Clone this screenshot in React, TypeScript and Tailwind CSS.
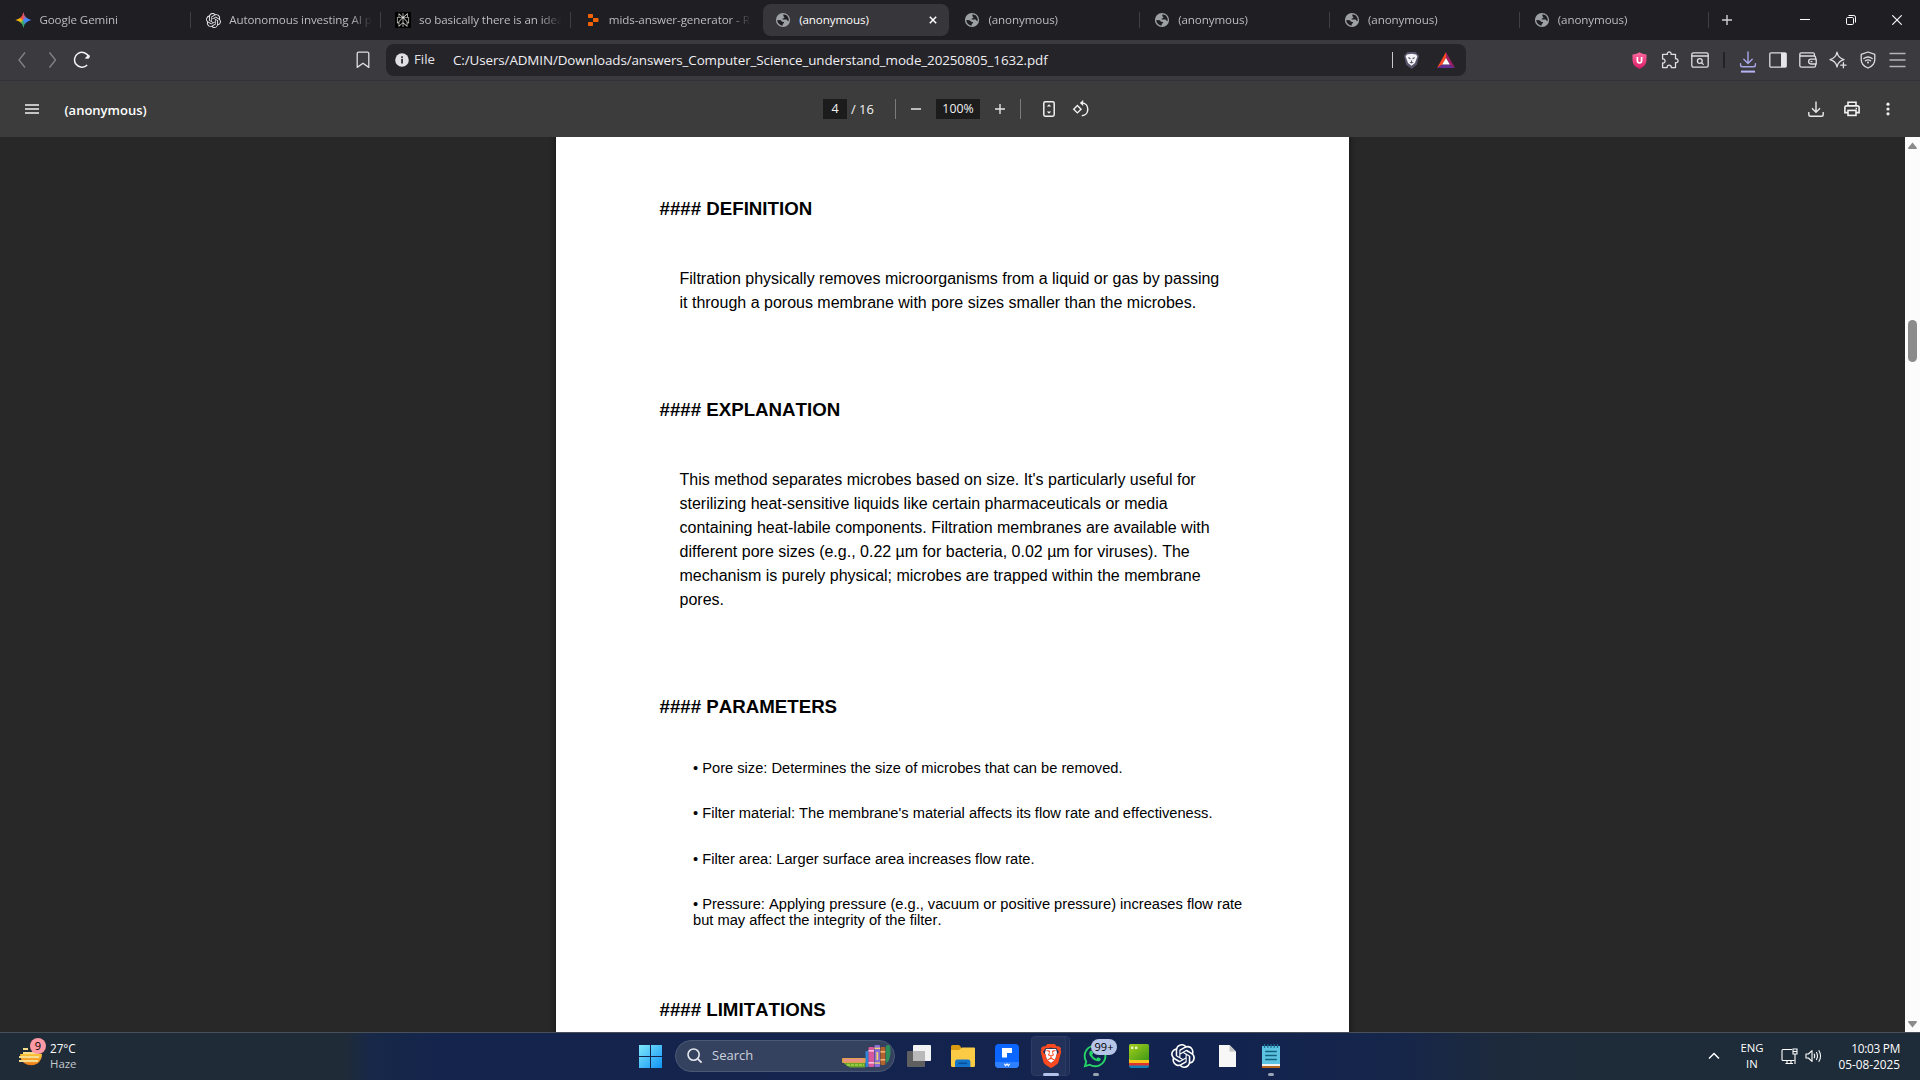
import React from "react";
import { SiBrave, SiOpenai, SiPerplexity } from "react-icons/si";
import { FaWhatsapp } from "react-icons/fa";

const ui = "font-['Open_Sans','Noto_Sans',sans-serif]";

function Svg({ w, h, children, className = "" }: { w: number; h: number; children: React.ReactNode; className?: string }) {
  return (
    <svg width={w} height={h} viewBox={`0 0 ${w} ${h}`} fill="none" className={`shrink-0 ${className}`}>
      {children}
    </svg>
  );
}

/* ---------- Tab strip ---------- */

function GeminiIcon() {
  return (
    <div className="h-4 w-4 shrink-0 bg-[conic-gradient(from_0deg,#f0525c,#4285f4_70deg,#4285f4_130deg,#2fa866_180deg,#7cb342_215deg,#fbbc05_265deg,#f6a623_290deg,#ea4335_330deg,#f0525c)] [clip-path:polygon(50%_0,57%_22%,68%_34%,82%_43%,100%_50%,82%_57%,68%_66%,57%_78%,50%_100%,43%_78%,32%_66%,18%_57%,0_50%,18%_43%,32%_34%,43%_22%)]" />
  );
}

function ReplitIcon() {
  return (
    <Svg w={16} h={16}>
      <rect x="3" y="2" width="5" height="4" rx="0.7" fill="#f26207" />
      <rect x="8" y="6" width="5.5" height="4" rx="0.7" fill="#f26207" />
      <rect x="3" y="10" width="5" height="4" rx="0.7" fill="#f26207" />
    </Svg>
  );
}

function GlobeIcon() {
  return (
    <Svg w={16} h={16}>
      <circle cx="8" cy="8" r="7.1" fill="#9da0a5" />
      <path
        d="M8.6 2.2 L12 3.6 L13.6 6.4 L13.7 9 L12.6 8.9 C12.4 7.9 11.7 7.6 10.7 7.6 L8.2 7.5 C7.5 7.4 7.4 6.7 7.8 6.4 L9.4 5.9 C9.6 4.6 8.3 4.6 8.3 3.7 Z"
        fill="#1f1f23"
      />
      <path d="M2.2 8.1 L5.6 8.3 C6.4 8.4 6.3 9.5 7.2 9.7 L8.7 9.9 C9.4 10.2 9 11.2 8.3 11.5 C7.5 11.9 8 12.9 7.4 13.7 C4.6 13.4 2.4 11.2 2.2 8.1 Z" fill="#1f1f23" />
    </Svg>
  );
}

type TabInfo = { title: string; icon: React.ReactNode; active?: boolean; sep?: boolean };

const tabs: TabInfo[] = [
  { title: "Google Gemini", icon: <GeminiIcon />, sep: true },
  { title: "Autonomous investing AI p", icon: <SiOpenai className="h-[15px] w-[15px] text-[#e6e6e6]" />, sep: true },
  {
    title: "so basically there is an idea",
    icon: (
      <span className="flex h-4 w-4 items-center justify-center bg-black">
        <SiPerplexity className="h-3.5 w-3.5 text-[#e8e8e0]" />
      </span>
    ),
    sep: true,
  },
  { title: "mids-answer-generator - R", icon: <ReplitIcon /> },
  { title: "(anonymous)", icon: <GlobeIcon />, active: true },
  { title: "(anonymous)", icon: <GlobeIcon />, sep: true },
  { title: "(anonymous)", icon: <GlobeIcon />, sep: true },
  { title: "(anonymous)", icon: <GlobeIcon />, sep: true },
  { title: "(anonymous)", icon: <GlobeIcon />, sep: true },
];

function Tab({ tab }: { tab: TabInfo }) {
  return (
    <div className="flex h-10 w-[189.8px] shrink-0 items-center">
      <div
        className={
          tab.active
            ? "flex h-8 w-[186px] items-center rounded-lg bg-[#37363b] pl-3 text-white"
            : "flex h-8 w-[186px] items-center pl-[11.4px] text-[#bdbcc0]"
        }
      >
        <span className="flex w-4 justify-center">{tab.icon}</span>
        <span
          className={
            tab.active
              ? "ml-2 flex-1 text-[11.6px] tracking-[-0.1px] whitespace-nowrap"
              : "mr-[8px] ml-2 flex-1 overflow-hidden [mask-image:linear-gradient(90deg,#000_calc(100%-22px),transparent)] text-[11.6px] tracking-[-0.1px] whitespace-nowrap"
          }
        >
          {tab.title}
        </span>
        {tab.active && (
          <Svg w={8} h={8} className="mr-3">
            <path d="M0.8 0.8 L7.2 7.2 M7.2 0.8 L0.8 7.2" stroke="#fff" strokeWidth="1.5" />
          </Svg>
        )}
      </div>
      {tab.sep && <div className="h-4 w-px bg-[#3f3e44]" />}
    </div>
  );
}

function TabStrip() {
  return (
    <div className="flex h-10 items-center bg-[#1f1e23] pl-1">
      {tabs.map((t, i) => (
        <Tab key={i} tab={t} />
      ))}
      <Svg w={12} h={12} className="ml-[9px]">
        <path d="M6 1 V11 M1 6 H11" stroke="#d0d0d3" strokeWidth="1.4" />
      </Svg>
      <Svg w={10} h={10} className="ml-[67px]">
        <path d="M0 4.5 H10" stroke="#fff" />
      </Svg>
      <Svg w={10} h={10} className="ml-9">
        <rect x="0.5" y="2.5" width="7" height="7" rx="1.2" stroke="#fff" />
        <path d="M2.5 0.5 H7.8 Q9.5 0.5 9.5 2.2 V7.5" stroke="#fff" />
      </Svg>
      <Svg w={10} h={10} className="ml-9">
        <path d="M0.3 0.3 L9.7 9.7 M9.7 0.3 L0.3 9.7" stroke="#fff" strokeWidth="1.1" />
      </Svg>
    </div>
  );
}

/* ---------- Address row ---------- */

function Cell({ children }: { children: React.ReactNode }) {
  return <div className="flex h-10 w-[30px] shrink-0 items-center justify-center">{children}</div>;
}

function BatIcon() {
  return (
    <Svg w={18} h={16}>
      <path d="M9 0 L0 16 L5.4 12.6 L9 6 Z" fill="#ff4724" />
      <path d="M9 0 L18 16 L12.6 12.6 L9 6 Z" fill="#9e1f63" />
      <path d="M0 16 H18 L12.8 12.4 H5.2 Z" fill="#662d91" />
      <path d="M9 6 L12.8 12.6 H5.2 Z" fill="#fff" />
    </Svg>
  );
}

const stroke = { stroke: "#dedde2", strokeWidth: 1.3, strokeLinejoin: "round", strokeLinecap: "round" } as const;

function AddressRow() {
  return (
    <div className="flex h-10 items-center bg-[#3b3a3f] pl-[7px]">
      <Cell>
        <Svg w={18} h={18}>
          <path d="M12 1.5 L6 9 L12 16.5" stroke="#85848a" strokeWidth="1.3" />
        </Svg>
      </Cell>
      <Cell>
        <Svg w={18} h={18}>
          <path d="M6.5 1.5 L12.5 9 L6.5 16.5" stroke="#85848a" strokeWidth="1.3" />
        </Svg>
      </Cell>
      <Cell>
        <Svg w={18} h={18}>
          <path d="M14.2 14 A7.4 7.4 0 1 1 15.8 6" stroke="#f4f4f6" strokeWidth="1.5" />
          <path d="M11.6 7.4 L15.6 3.4 Q17 4 16.8 5.6 Q16.6 7.6 15.2 7.8 Z" fill="#f4f4f6" />
        </Svg>
      </Cell>
      <div className="ml-[254px] flex w-6 justify-center">
        <Svg w={14} h={18}>
          <path d="M1.2 2.6 Q1.2 1.2 2.6 1.2 H11.4 Q12.8 1.2 12.8 2.6 V16.4 L7 12.2 L1.2 16.4 Z" stroke="#dedde2" strokeWidth="1.3" strokeLinejoin="round" />
        </Svg>
      </div>
      <div className="ml-[11px] flex h-8 w-[1080px] shrink-0 items-center rounded-lg bg-[#252429] pr-[11px] pl-[9px] text-[#e3e2e6]">
        <Svg w={14} h={14}>
          <circle cx="7" cy="7" r="6.8" fill="#e0dfe4" />
          <rect x="6.2" y="5.8" width="1.7" height="4.7" fill="#252429" />
          <rect x="6.2" y="3.3" width="1.7" height="1.6" fill="#252429" />
        </Svg>
        <span className="ml-[5px] w-[39px] text-[13.2px]">File</span>
        <span className="flex-1 text-[13.4px] tracking-[-0.1px] whitespace-nowrap text-[#f0eff3]">
          C:/Users/ADMIN/Downloads/answers_Computer_Science_understand_mode_20250805_1632.pdf
        </span>
        <div className="h-4 w-px bg-[#c9c8cd]" />
        <Svg w={15} h={17} className="ml-[11px]">
          <path d="M3.5 0 H11.5 L15 3.5 L13 12.5 L7.5 17 L2 12.5 L0 3.5 Z" fill="#55546a" />
          <path
            fillRule="evenodd"
            d="M3 2.4 L7.5 1.8 L12 2.4 L13.4 4.4 L11.6 9.2 L11 11 L7.5 13.8 L4 11 L3.4 9.2 L1.6 4.4 Z M4.2 5 L6.6 6 L6.2 7.4 L4.4 6.3 Z M10.8 5 L8.4 6 L8.8 7.4 L10.6 6.3 Z M6.8 8.6 H8.2 L7.9 9.8 L9.6 10.6 L7.5 11.5 L5.4 10.6 L7.1 9.8 Z"
            fill="#f4f4f8"
          />
        </Svg>
        <div className="ml-[18px]">
          <BatIcon />
        </div>
      </div>
      <div className="ml-[158.5px] flex items-center">
        <Cell>
          <Svg w={15} h={17}>
            <defs>
              <linearGradient id="ub" x1="0" y1="0" x2="0" y2="1">
                <stop offset="0" stopColor="#ff6ba0" />
                <stop offset="1" stopColor="#d91b66" />
              </linearGradient>
            </defs>
            <path d="M7.5 0.3 C9.6 1.7 12 2.2 14.5 2.4 V8 C14.5 12.4 11.6 15.2 7.5 16.8 C3.4 15.2 0.5 12.4 0.5 8 V2.4 C3 2.2 5.4 1.7 7.5 0.3 Z" fill="url(#ub)" />
            <path d="M5.4 5 V8.8 Q5.4 11 7.5 11 Q9.6 11 9.6 8.8 V5" stroke="#fff" strokeWidth="1.7" />
          </Svg>
        </Cell>
        <Cell>
          <Svg w={18} h={18}>
            <path
              d="M1.6 3.4 H6.3 C6 1.9 7 0.9 8.2 0.9 C9.5 0.9 10.4 1.9 10.1 3.4 H14.5 V7.8 C16 7.5 17.1 8.4 17.1 9.7 C17.1 11 16 11.9 14.5 11.6 V16.6 H10.3 C10.4 15 9.5 14.2 8.2 14.2 C6.9 14.2 6 15 6.1 16.6 H1.6 V12 C3.2 12.2 4.1 11.2 4.1 10 C4.1 8.7 3.2 7.8 1.6 8 Z"
              {...stroke}
            />
          </Svg>
        </Cell>
        <Cell>
          <Svg w={18} h={16}>
            <rect x="0.8" y="0.8" width="16.4" height="14.4" rx="1.6" {...stroke} />
            <path d="M1 4 H17" {...stroke} />
            <circle cx="8.8" cy="9" r="2.4" {...stroke} />
            <path d="M10.7 10.9 L12.3 12.4" {...stroke} />
          </Svg>
        </Cell>
        <div className="flex w-[18px] justify-center">
          <div className="h-4 w-0.5 bg-[#232227]" />
        </div>
        <Cell>
          <Svg w={18} h={22} className="mt-1">
            <path d="M9 1 V12 M4.8 8.2 L9 12.4 L13.2 8.2 M1.6 12.8 V14 Q1.6 15.8 3.4 15.8 H14.6 Q16.4 15.8 16.4 14 V12.8" stroke="#a9a6e8" strokeWidth="1.4" strokeLinecap="round" />
            <rect x="2" y="19.6" width="14" height="2" fill="#b7b4f5" />
          </Svg>
        </Cell>
        <Cell>
          <Svg w={18} h={16}>
            <rect x="0.8" y="0.8" width="16.4" height="14.4" rx="1.2" {...stroke} />
            <rect x="12" y="1" width="5.2" height="14" fill="#e6e5ea" />
          </Svg>
        </Cell>
        <Cell>
          <Svg w={18} h={16}>
            <path d="M15.4 4 V2.2 Q15.4 0.8 14 0.8 H2.4 Q0.8 0.8 0.8 2.4 V13.4 Q0.8 15.2 2.6 15.2 H15 Q16.6 15.2 16.6 13.6 V5.4 Q16.6 4 15.2 4 H2.4 Q0.8 4 0.8 2.4" {...stroke} />
            <path d="M17.2 7.2 H12 Q9.6 7.2 9.6 9.6 Q9.6 12 12 12 H17.2 Z M12 9.6 H13" {...stroke} fill="#3b3a3f" />
          </Svg>
        </Cell>
        <Cell>
          <Svg w={18} h={18}>
            <path d="M8 1.2 C8.8 5.6 10.8 7.6 15 8.6 C10.8 9.6 8.8 11.6 8 16 C7.2 11.6 5.2 9.6 1 8.6 C5.2 7.6 7.2 5.6 8 1.2 Z" {...stroke} />
            <circle cx="14.4" cy="14.2" r="3.6" fill="#3b3a3f" />
            <path d="M14.4 11.6 V16.8 M11.8 14.2 H17" {...stroke} />
          </Svg>
        </Cell>
        <Cell>
          <Svg w={16} h={18}>
            <path d="M8 1 L14.8 3.4 V8.4 C14.8 12.4 12 15.4 8 17 C4 15.4 1.2 12.4 1.2 8.4 V3.4 Z" {...stroke} />
            <path d="M3.8 7.6 Q8 4.4 12.2 7.6 M5.4 9.8 Q8 8 10.6 9.8" {...stroke} />
            <circle cx="8" cy="11.6" r="1" fill="#dedde2" />
          </Svg>
        </Cell>
        <Cell>
          <Svg w={17} h={16}>
            <path d="M0.5 1.6 H16.5 M0.5 8 H16.5 M0.5 14.4 H16.5" stroke="#b5b4b9" strokeWidth="1.5" />
          </Svg>
        </Cell>
      </div>
    </div>
  );
}

/* ---------- PDF toolbar ---------- */

function PdfToolbar() {
  return (
    <div className="flex h-[57px] items-center border-t border-[#333238] bg-[#3c3c3c] text-[#f1f1f1]">
      <Svg w={14} h={10} className="ml-[25px]">
        <path d="M0 1 H14 M0 5 H14 M0 9 H14" stroke="#f1f1f1" strokeWidth="1.3" />
      </Svg>
      <span className="mt-[3px] ml-[25.5px] w-[758.5px] text-[13px] font-semibold text-white">(anonymous)</span>
      <div className="flex h-5 w-6 items-center justify-center bg-[#1c1c1c] pt-px text-[12.5px] font-medium">4</div>
      <span className="mt-px ml-1 w-[44px] text-[12.9px] font-medium">/ 16</span>
      <div className="h-5 w-px bg-[#7a7a7a]" />
      <Svg w={12} h={12} className="ml-[14px]">
        <path d="M1 6 H11" stroke="#e4e4e4" strokeWidth="1.5" />
      </Svg>
      <div className="ml-[14px] flex h-5 w-11 items-center justify-center bg-[#1c1c1c] pt-px text-[12.3px] font-medium">100%</div>
      <Svg w={12} h={12} className="ml-[14px]">
        <path d="M1 6 H11 M6 1 V11" stroke="#e4e4e4" strokeWidth="1.4" />
      </Svg>
      <div className="ml-[14px] h-5 w-px bg-[#7a7a7a]" />
      <Svg w={12} h={16} className="ml-[22px]">
        <rect x="0.8" y="0.8" width="10.4" height="14.4" rx="1.4" stroke="#f1f1f1" strokeWidth="1.5" />
        <path d="M6 3.2 L8.2 5.6 H3.8 Z M6 12.8 L8.2 10.4 H3.8 Z" fill="#f1f1f1" />
      </Svg>
      <Svg w={18} h={18} className="ml-[17px]">
        <path d="M9.6 3 C13.4 3 15.8 5.6 15.8 9.2 C15.8 12.8 13.4 15.6 9.8 15.8" stroke="#f1f1f1" strokeWidth="1.5" />
        <path d="M11.2 0 V6 L7.8 3 Z" fill="#f1f1f1" />
        <rect x="2.8" y="6.6" width="5.2" height="5.2" transform="rotate(45 5.4 9.2)" stroke="#f1f1f1" strokeWidth="1.4" />
      </Svg>
      <Svg w={16} h={16} className="ml-[718px]">
        <path d="M8 0.5 V11 M4 7.2 L8 11.2 L12 7.2 M0.8 11 V13.4 Q0.8 15.2 2.6 15.2 H13.4 Q15.2 15.2 15.2 13.4 V11" stroke="#e8e8e8" strokeWidth="1.4" />
      </Svg>
      <Svg w={16} h={16} className="ml-5">
        <path d="M4 4.8 V1.2 H12 V4.8 M4 11.6 H0.9 V6.6 Q0.9 4.9 2.6 4.9 H13.4 Q15.1 4.9 15.1 6.6 V11.6 H12" stroke="#f1f1f1" strokeWidth="1.6" />
        <rect x="4" y="9.4" width="8" height="5" stroke="#f1f1f1" strokeWidth="1.6" />
        <rect x="11.6" y="6.8" width="1.4" height="1.4" fill="#f1f1f1" />
      </Svg>
      <Svg w={4} h={14} className="ml-[26px]">
        <circle cx="2" cy="2.2" r="1.6" fill="#f1f1f1" />
        <circle cx="2" cy="7" r="1.6" fill="#f1f1f1" />
        <circle cx="2" cy="11.8" r="1.6" fill="#f1f1f1" />
      </Svg>
    </div>
  );
}

/* ---------- PDF page ---------- */

function Heading({ children, className }: { children: string; className: string }) {
  return <h4 className={`ml-[103.5px] text-[18.7px] leading-6 font-bold ${className}`}>{children}</h4>;
}

function Lines({ lines }: { lines: string[] }) {
  return (
    <div className="mt-[46px] ml-[123.5px] text-[16px] leading-6">
      {lines.map((l) => (
        <div key={l}>{l}</div>
      ))}
    </div>
  );
}

function PdfPage() {
  return (
    <div className="flex h-[895px] overflow-hidden bg-[#282828]">
      <div className="ml-[556px] h-[895px] w-[793px] overflow-hidden bg-white pt-[60px] font-['Liberation_Sans',Arial,sans-serif] whitespace-nowrap text-black shadow-[0_0_5px_2px_rgba(0,0,0,0.35)] [font-kerning:none] [font-variant-ligatures:none]">
        <Heading className="">#### DEFINITION</Heading>
        <Lines
          lines={[
            "Filtration physically removes microorganisms from a liquid or gas by passing",
            "it through a porous membrane with pore sizes smaller than the microbes.",
          ]}
        />
        <Heading className="mt-[83px]">#### EXPLANATION</Heading>
        <Lines
          lines={[
            "This method separates microbes based on size. It's particularly useful for",
            "sterilizing heat-sensitive liquids like certain pharmaceuticals or media",
            "containing heat-labile components. Filtration membranes are available with",
            "different pore sizes (e.g., 0.22 µm for bacteria, 0.02 µm for viruses). The",
            "mechanism is purely physical; microbes are trapped within the membrane",
            "pores.",
          ]}
        />
        <Heading className="mt-[83px]">#### PARAMETERS</Heading>
        <ul className="mt-[41px] ml-[137px] text-[14.667px] leading-4">
          <li>• Pore size: Determines the size of microbes that can be removed.</li>
          <li className="mt-[29px]">• Filter material: The membrane's material affects its flow rate and effectiveness.</li>
          <li className="mt-[30px]">• Filter area: Larger surface area increases flow rate.</li>
          <li className="mt-[29px]">
            • Pressure: Applying pressure (e.g., vacuum or positive pressure) increases flow rate
            <br />
            but may affect the integrity of the filter.
          </li>
        </ul>
        <Heading className="mt-[70px]">#### LIMITATIONS</Heading>
      </div>
      <div className="ml-auto flex w-[15px] flex-col items-center bg-[#fcfcfc]">
        <Svg w={9} h={7} className="mt-[5px]">
          <path d="M4.5 0.5 L9 6 Q9 7 8 7 H1 Q0 7 0 6 Z" fill="#8b8b8b" />
        </Svg>
        <div className="mt-[171px] h-[42px] w-[9px] rounded-full bg-[#8b8b8b]" />
        <Svg w={9} h={7} className="mt-auto mb-1">
          <path d="M4.5 6.5 L9 1 Q9 0 8 0 H1 Q0 0 0 1 Z" fill="#8b8b8b" />
        </Svg>
      </div>
    </div>
  );
}

/* ---------- Taskbar ---------- */

function Books() {
  return (
    <Svg w={50} h={24}>
      <path d="M0 17 H23 V23.5 H8 Q3 21.5 0 17 Z" fill="#6aa52c" />
      <rect x="0" y="14" width="24" height="5" rx="1" fill="#e0a04a" />
      <rect x="2" y="15" width="19" height="2.6" fill="#e88f8a" />
      <path d="M5 21 H22" stroke="#a7d94a" strokeWidth="1.6" strokeDasharray="3 1" />
      <rect x="23.5" y="7" width="3" height="16" fill="#2f86d8" />
      <rect x="26.5" y="3" width="5.5" height="20" rx="1" fill="#d9589b" />
      <rect x="26.5" y="6" width="5.5" height="1.6" fill="#ffc0dd" />
      <rect x="26.5" y="18" width="5.5" height="1.6" fill="#ffc0dd" />
      <rect x="32.5" y="1" width="5.5" height="22" rx="1" fill="#8b6fd8" />
      <rect x="32.5" y="3.6" width="5.5" height="1.4" fill="#f4d06a" />
      <rect x="34.4" y="8" width="1.8" height="8" fill="#f4d06a" />
      <rect x="32.5" y="18.4" width="5.5" height="1.4" fill="#f4d06a" />
      <rect x="38.5" y="3" width="4.8" height="18" rx="1" fill="#b3622d" />
      <rect x="38.5" y="7" width="4.8" height="1.6" fill="#f0b27a" />
      <rect x="38.5" y="15" width="4.8" height="1.6" fill="#f0b27a" />
      <path d="M43.8 2 Q46 0 48 2 Q49.6 10 46.6 17 L43.8 19.5 Z" fill="#2f8f5a" />
    </Svg>
  );
}

function BraveIcon() {
  return (
    <div className="relative flex h-6 w-6 items-center justify-center">
      <Svg w={14} h={16} className="absolute">
        <path d="M2 1 H12 L13 5 L11 12 L7 15 L3 12 L1 5 Z" fill="#fff" />
      </Svg>
      <SiBrave className="relative h-6 w-6 text-[#fb4a1f]" />
    </div>
  );
}

function AppCell({ children, className = "" }: { children: React.ReactNode; className?: string }) {
  return <div className={`relative flex h-10 w-11 shrink-0 items-center justify-center ${className}`}>{children}</div>;
}

function Taskbar() {
  return (
    <div className="flex h-12 items-center border-t border-[#4a5059] bg-[linear-gradient(90deg,#1f2b37_0px,#1f2b37_345px,#182848_370px,#14244c_440px,#14244d_640px,#12234f_1240px,#16264a_1400px,#1d2a3c_1500px,#1e2b38_1600px,#1e2b38_1920px)] pb-px text-white">
      <div className="relative ml-[18px] h-8 w-[32px]">
        <Svg w={28} h={30}>
          <defs>
            <linearGradient id="sun" x1="0" y1="0" x2="0" y2="1">
              <stop offset="0" stopColor="#f8c63a" />
              <stop offset="1" stopColor="#f07a1a" />
            </linearGradient>
          </defs>
          <path d="M2 14 H24 Q24 20 19.5 23.4 Q12.5 27.5 6 23 Q4 21.5 3 19 Z" fill="url(#sun)" />
          <path d="M5 9 H10 M5 13 H20 M1 17 H21 M1 21 H20" stroke="#f5dc8e" strokeWidth="1.8" />
        </Svg>
        <div className="absolute -top-[2px] left-3 flex h-4 w-4 items-center justify-center rounded-full bg-[#ff99a4] text-[11px] text-black">9</div>
      </div>
      <div className="w-[589px] leading-4">
        <div className="text-[11.7px]">27°C</div>
        <div className="text-[11.4px] text-[#c4c9ce]">Haze</div>
      </div>

      <Svg w={23} h={23}>
        <defs>
          <linearGradient id="win" x1="0" y1="0" x2="1" y2="1">
            <stop offset="0" stopColor="#7fe9fb" />
            <stop offset="1" stopColor="#1093f5" />
          </linearGradient>
        </defs>
        <path d="M0 0 H11 V11 H0 Z M12 0 H23 V11 H12 Z M0 12 H11 V23 H0 Z M12 12 H23 V23 H12 Z" fill="url(#win)" />
      </Svg>
      <div className="ml-[13px] flex h-8 w-[220px] items-center rounded-full border border-[#4a5878] bg-[#35425f] pr-[2px] pl-[11px]">
        <Svg w={16} h={16}>
          <circle cx="6.6" cy="6.6" r="5.6" stroke="#e4e7ee" strokeWidth="1.6" />
          <path d="M10.8 10.8 L14.6 14.6" stroke="#e4e7ee" strokeWidth="1.8" />
        </Svg>
        <span className="ml-[9px] flex-1 text-[13px] text-[#ccd2dd]">Search</span>
        <Books />
      </div>
      <div className="flex items-center">
        <AppCell className="ml-[2px]">
          <Svg w={24} h={22}>
            <rect x="6" y="0" width="18" height="16" rx="1" fill="#f2f2f2" />
            <rect x="0" y="6" width="18" height="16" rx="1" fill="#5f5f5f" />
            <path d="M6 6 H18 V16 H6 Z" fill="#b9b9b9" />
          </Svg>
        </AppCell>
        <AppCell>
          <Svg w={24} h={22}>
            <path d="M0 1.5 Q0 0 1.5 0 H8 L10.5 2.5 H0 Z M0 2 H10 V6 H0 Z" fill="#d99a12" />
            <path d="M0 5 H8 L11 2.4 H23 Q24 2.4 24 3.4 V20.5 Q24 22 22.5 22 H1.5 Q0 22 0 20.5 Z" fill="#fccb45" />
            <path d="M4 22 V17 Q4 14.6 6.4 14.6 H17 Q19.4 14.6 19.4 17 V22 Z" fill="#1374cc" />
            <rect x="7.5" y="17.5" width="8.6" height="1.6" fill="#0a4f96" />
          </Svg>
        </AppCell>
        <AppCell>
          <Svg w={24} h={24}>
            <rect width="24" height="24" rx="4" fill="#0a66ff" />
            <path d="M7 4 H17 V9 H12 V13.5 H7 Z" fill="#fff" />
            <path d="M0 18 H24 V20 Q24 24 20 24 H4 Q0 24 0 20 Z" fill="#2f80ff" />
            <path d="M9.4 19.8 L10.6 21.8 L12 20 L13.4 21.8 L14.6 19.8" stroke="#fff" strokeWidth="1.2" />
          </Svg>
        </AppCell>
        <AppCell>
          <div className="absolute top-0 left-[2px] h-10 w-[39px] rounded border border-[#2d3c62] bg-[#1d2d57]" />
          <div className="absolute top-0 left-[2px] h-10 w-[35px] rounded border border-[#2d3c62] bg-[#22325a]" />
          <BraveIcon />
          <div className="absolute bottom-0 left-[14px] h-[3px] w-4 rounded-full bg-[#b4c3e8]" />
        </AppCell>
        <AppCell>
          <FaWhatsapp className="h-[26px] w-[26px] text-[#25d366]" />
          <div className="absolute top-[3px] left-[18px] flex h-4 w-[26px] items-center justify-center rounded-full bg-[#b6c5e8] text-[11px] text-black">99+</div>
          <div className="absolute bottom-0 left-[20px] h-[3px] w-1.5 rounded-full bg-[#9aa3b5]" />
        </AppCell>
        <AppCell>
          <Svg w={20} h={24}>
            <defs>
              <linearGradient id="bs" x1="0" y1="0" x2="1" y2="1">
                <stop offset="0" stopColor="#a5cf1c" />
                <stop offset="1" stopColor="#3f9a18" />
              </linearGradient>
            </defs>
            <rect width="20" height="24" rx="2" fill="#1180b8" />
            <path d="M0 15 H20 V21.5 H0 Z" fill="#e2342c" />
            <path d="M0 14 H20 V19 H0 Z" fill="#f6c51e" />
            <path d="M0 2 Q0 0 2 0 H18 Q20 0 20 2 V16 H2 Q0 16 0 14 Z" fill="url(#bs)" />
            <rect x="2" y="2.6" width="2.4" height="2.4" fill="#e6f3c0" />
            <rect x="6" y="2.6" width="2.4" height="2.4" fill="#e6f3c0" />
          </Svg>
        </AppCell>
        <AppCell>
          <SiOpenai className="h-6 w-6 text-white" />
        </AppCell>
        <AppCell>
          <Svg w={17} h={22}>
            <path d="M0 0 H10.5 L17 6.5 V22 H0 Z" fill="#f7f7f7" />
            <path d="M10.5 0 L17 6.5 H10.5 Z" fill="#c4c4c4" />
          </Svg>
        </AppCell>
        <AppCell>
          <Svg w={18} h={24}>
            <rect x="0" y="2" width="18" height="19" fill="#5cc4e2" />
            <rect x="0" y="20" width="18" height="2" fill="#f2f2f2" />
            <rect x="0" y="22" width="18" height="2" fill="#b5651d" />
            <path d="M2.5 0 V4 M5.8 0 V4 M9 0 V4 M12.2 0 V4 M15.5 0 V4" stroke="#1b6f91" strokeWidth="1.2" />
            <path d="M3.2 7.5 H14.8 M3.2 11.5 H14.8 M3.2 15.5 H14.8" stroke="#14607f" strokeWidth="1.4" />
          </Svg>
          <div className="absolute bottom-0 left-[19px] h-[3px] w-1.5 rounded-full bg-[#9aa3b5]" />
        </AppCell>
      </div>

      <div className="mr-[20px] ml-auto flex items-center">
        <Svg w={12} h={8}>
          <path d="M1 6.5 L6 1.5 L11 6.5" stroke="#fff" strokeWidth="1.5" />
        </Svg>
        <div className="ml-[19px] w-[25px] text-center text-[11.3px] leading-4">
          <div>ENG</div>
          <div>IN</div>
        </div>
        <Svg w={17} h={17} className="ml-[17px]">
          <path d="M11 1.5 H2 Q1 1.5 1 2.5 V11.5 Q1 12.5 2 12.5 H13.5 M4.5 15.5 H12 M6 12.5 V15.5 M10 12.5 V15.5" stroke="#fff" strokeWidth="1.1" />
          <path d="M12 1 H16 V6 H12 Z M12 3.5 H16 M14 6 V16" stroke="#fff" strokeWidth="1.1" />
        </Svg>
        <Svg w={17} h={14} className="ml-[7px]">
          <path d="M1 5 H3.4 L7 1.6 V12.4 L3.4 9 H1 Z" stroke="#fff" strokeWidth="1.1" strokeLinejoin="round" />
          <path d="M9 4.8 Q10.4 7 9 9.2 M11.3 3 Q13.6 7 11.3 11 M13.7 1.2 Q17.4 7 13.7 12.8" stroke="#fff" strokeWidth="1.1" />
        </Svg>
        <div className="ml-4 text-right text-[11.8px] leading-4">
          <div className="tracking-[-0.25px]">10:03 PM</div>
          <div>05-08-2025</div>
        </div>
      </div>
    </div>
  );
}

export default function App() {
  return (
    <div className={`flex h-[1080px] w-[1920px] flex-col overflow-hidden ${ui}`}>
      <TabStrip />
      <AddressRow />
      <PdfToolbar />
      <PdfPage />
      <Taskbar />
    </div>
  );
}
